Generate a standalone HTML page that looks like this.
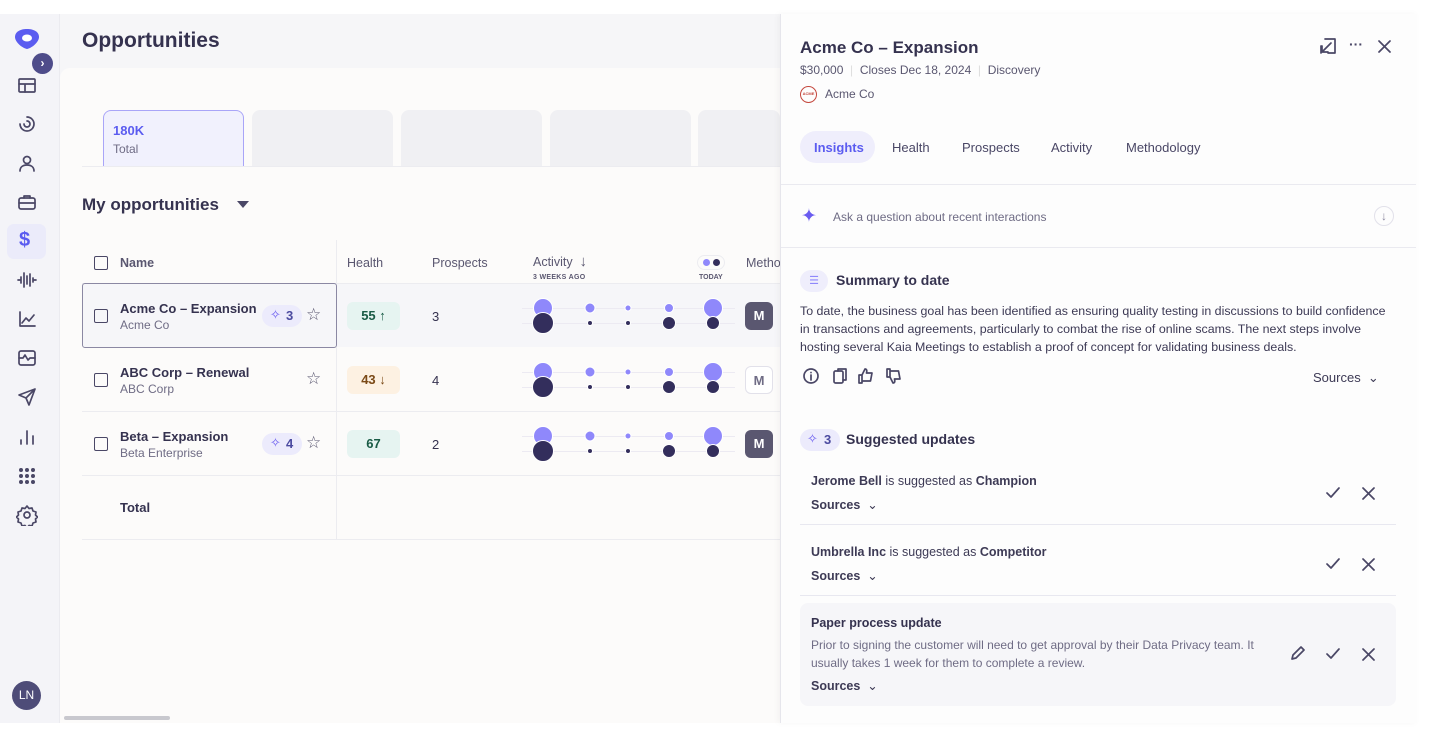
<!DOCTYPE html>
<html><head><meta charset="utf-8"><style>
*{box-sizing:border-box;margin:0;padding:0}
body{width:1429px;height:738px;background:#fff;font-family:"Liberation Sans",sans-serif;color:#35324f;position:relative;overflow:hidden}
.a{position:absolute}
.side{left:0;top:14px;width:60px;height:709px;background:#f4f4f8;border-right:1px solid #ebebf0}
.main{left:60px;top:14px;width:720px;height:709px;background:#f6f6f8}
.inner{left:60px;top:68px;width:720px;height:655px;background:#fcfbfa;border-top-left-radius:10px}
.ic{stroke:#4a4766;fill:none;stroke-width:1.7;stroke-linecap:round;stroke-linejoin:round}
.card{top:110px;width:141px;height:56px;background:#f0f0f3;border-radius:8px 8px 0 0}
.th{font-size:12.5px;color:#5a5770;top:256px}
.cb{width:14px;height:14px;border:1.8px solid #4a4766;border-radius:2px}
.nm{font-size:13px;font-weight:bold;color:#35324f}
.sub{font-size:12px;color:#6f6c85}
.hl{width:53px;height:28px;border-radius:6px;font-size:13px;font-weight:bold;text-align:center;line-height:28px}
.ai{height:22px;border-radius:11px;background:#ecebfc;color:#4b4aa0;font-size:13px;font-weight:bold;line-height:22px;padding-left:24px;width:40px}
.dot{position:absolute;border-radius:50%;transform:translate(-50%,-50%)}
.l{background:#8f88fb;border:1px solid #fff}.d{background:#332e5c;border:1px solid #fff}
.line{position:absolute;height:1px;background:#eceaf2;left:522px;width:213px}
.m{width:28px;height:28px;border-radius:6px;font-size:13px;font-weight:bold;text-align:center;line-height:28px}
.panel{left:780px;top:14px;width:637px;height:709px;background:#fdfdfd;border-left:1px solid #e6e6ec;box-shadow:-2px 0 6px rgba(0,0,0,.04)}
.tab{top:140px;font-size:13px;color:#4a4766}
.src{font-size:13px;font-weight:bold;color:#3d3a55}
</style></head><body>
<div class="a side"></div>
<div class="a main"></div>
<div class="a inner"></div>
<svg class="a" style="left:13px;top:27px" width="28" height="24" viewBox="0 0 28 24"><path d="M14 2C7 2 2 5 2 10c0 5 7 11 12 12 5-1 12-7 12-12 0-5-5-8-12-8z" fill="#5b5cf0"/><ellipse cx="14" cy="11" rx="5" ry="3.5" fill="#fff"/></svg>
<div class="a" style="left:32px;top:53px;width:21px;height:21px;border-radius:50%;background:#4e4c8a;color:#fff;font-size:12px;text-align:center;line-height:20px;font-weight:bold">›</div>
<svg class="a ic" style="left:17px;top:76px" width="20" height="20"><rect x="2" y="3" width="16" height="13" rx="1"/><path d="M2 8h16M8 8v8"/></svg>
<svg class="a ic" style="left:17px;top:114px" width="20" height="20"><path d="M10 3a7 7 0 1 1-7 7"/><path d="M10 7a3 3 0 1 1-3 3"/></svg>
<svg class="a ic" style="left:17px;top:153px" width="20" height="20"><circle cx="10" cy="7" r="3.5"/><path d="M3 18c0-4 3-6 7-6s7 2 7 6"/></svg>
<svg class="a ic" style="left:17px;top:192px" width="20" height="20"><rect x="2" y="6" width="16" height="11" rx="2"/><path d="M7 6V4h6v2M2 11h16"/></svg>
<div class="a" style="left:7px;top:224px;width:39px;height:35px;border-radius:7px;background:#ebebfa"></div>
<div class="a" style="left:19px;top:229px;font-size:20px;font-weight:bold;color:#5b5cf0">$</div>
<svg class="a ic" style="left:16px;top:270px" width="22" height="20"><path d="M2 10h3M5 7v6M8 3v14M11 6v8M14 4v12M17 8v4M17 10h3"/></svg>
<svg class="a ic" style="left:17px;top:309px" width="20" height="20"><path d="M3 3v14h15M5 14l4-5 3 3 5-6"/></svg>
<svg class="a ic" style="left:17px;top:348px" width="20" height="20"><rect x="2" y="3" width="16" height="14" rx="2"/><path d="M2 10h4l2-3 3 5 2-2h5"/></svg>
<svg class="a ic" style="left:17px;top:387px" width="20" height="20"><path d="M18 2L2 8l7 3 3 7z M9 11l9-9"/></svg>
<svg class="a ic" style="left:17px;top:427px" width="20" height="20" stroke-width="2.5"><path d="M4 17v-4M10 17V4M16 17V9"/></svg>
<svg class="a" style="left:17px;top:466px" width="20" height="20" fill="#4a4766"><circle cx="4" cy="4" r="2"/><circle cx="10" cy="4" r="2"/><circle cx="16" cy="4" r="2"/><circle cx="4" cy="10" r="2"/><circle cx="10" cy="10" r="2"/><circle cx="16" cy="10" r="2"/><circle cx="4" cy="16" r="2"/><circle cx="10" cy="16" r="2"/><circle cx="16" cy="16" r="2"/></svg>
<svg class="a ic" style="left:16px;top:504px" width="22" height="22"><circle cx="11" cy="11" r="3"/><path d="M11 2l2 2.5 3-.5 1 3 3 1-.5 3 2 2-2 2 .5 3-3 1-1 3-3-.5-2 2.5-2-2.5-3 .5-1-3-3-1 .5-3-2-2 2-2-.5-3 3-1 1-3 3 .5z"/></svg>
<div class="a" style="left:12px;top:681px;width:29px;height:29px;border-radius:50%;background:#4e4c78;color:#fff;font-size:12px;text-align:center;line-height:29px">LN</div>
<div class="a" style="left:64px;top:716px;width:106px;height:4px;border-radius:2px;background:#c8c8ce"></div>

<div class="a" style="left:82px;top:29px;font-size:21px;font-weight:bold;color:#35324f">Opportunities</div>
<div class="a card" style="left:103px;background:#f1f1fd;border:1.5px solid #a9a5f8;border-bottom:none"></div>
<div class="a" style="left:113px;top:123px;font-size:13px;font-weight:bold;color:#5b5cf0">180K</div>
<div class="a" style="left:113px;top:142px;font-size:12px;color:#6f6c85">Total</div>
<div class="a card" style="left:252px"></div><div class="a card" style="left:401px"></div><div class="a card" style="left:550px"></div><div class="a card" style="left:698px;width:82px"></div>
<div class="a" style="left:82px;top:166px;width:698px;height:1px;background:#ececf0"></div>

<div class="a" style="left:82px;top:195px;font-size:17px;font-weight:bold">My opportunities</div>
<div class="a" style="left:237px;top:201px;width:0;height:0;border-left:6px solid transparent;border-right:6px solid transparent;border-top:7px solid #4a4766"></div>

<div class="a" style="left:336px;top:240px;width:1px;height:300px;background:#ececf0"></div>
<div class="a cb" style="left:94px;top:256px"></div>
<div class="a th" style="left:120px;font-weight:bold">Name</div>
<div class="a th" style="left:347px">Health</div>
<div class="a th" style="left:432px">Prospects</div>
<div class="a th" style="left:533px;top:253px">Activity &nbsp;<span style="font-size:15px">↓</span></div>
<div class="a" style="left:533px;top:274px;font-size:7px;font-weight:bold;color:#5a5770;letter-spacing:.3px">3 WEEKS AGO</div>
<div class="a" style="left:697px;top:255px;width:28px;height:15px;border-radius:8px;border:1px solid #ececf0"></div>
<div class="a" style="left:703px;top:259px;width:7px;height:7px;border-radius:50%;background:#8f88fb"></div>
<div class="a" style="left:713px;top:259px;width:7px;height:7px;border-radius:50%;background:#332e5c"></div>
<div class="a" style="left:699px;top:274px;font-size:7px;font-weight:bold;color:#5a5770">TODAY</div>
<div class="a th" style="left:746px">Metho</div>
<div class="a" style="left:82px;top:283px;width:698px;height:1px;background:#ececf0"></div>
<div class="a" style="left:336px;top:284px;width:444px;height:63px;background:#f6f6f9"></div>
<div class="a" style="left:82px;top:283px;width:255px;height:65px;border:1.5px solid #8b88a3;border-radius:3px;background:#f6f6f9"></div>
<div class="a" style="left:82px;top:411px;width:698px;height:1px;background:#ececf0"></div>
<div class="a" style="left:82px;top:475px;width:698px;height:1px;background:#ececf0"></div>
<div class="a" style="left:82px;top:539px;width:698px;height:1px;background:#ececf0"></div>

<div class="a cb" style="left:94px;top:309px"></div>
<div class="a nm" style="left:120px;top:301px">Acme Co – Expansion</div>
<div class="a sub" style="left:120px;top:318px">Acme Co</div>
<div class="a ai" style="left:262px;top:305px">3</div><div class="a" style="left:270px;top:307px;color:#6a5cf0;font-size:13px">✧</div>
<div class="a" style="left:306px;top:305px;font-size:17px;color:#5a5770">☆</div>
<div class="a hl" style="left:347px;top:302px;background:#e6f4f1;color:#195b45">55 ↑</div>
<div class="a" style="left:432px;top:309px;font-size:13px">3</div>

<div class="a cb" style="left:94px;top:373px"></div>
<div class="a nm" style="left:120px;top:365px">ABC Corp – Renewal</div>
<div class="a sub" style="left:120px;top:382px">ABC Corp</div>
<div class="a" style="left:306px;top:369px;font-size:17px;color:#5a5770">☆</div>
<div class="a hl" style="left:347px;top:366px;background:#fdf1e2;color:#7b4a17">43 ↓</div>
<div class="a" style="left:432px;top:373px;font-size:13px">4</div>

<div class="a cb" style="left:94px;top:437px"></div>
<div class="a nm" style="left:120px;top:429px">Beta – Expansion</div>
<div class="a sub" style="left:120px;top:446px">Beta Enterprise</div>
<div class="a ai" style="left:262px;top:433px">4</div><div class="a" style="left:270px;top:435px;color:#6a5cf0;font-size:13px">✧</div>
<div class="a" style="left:306px;top:433px;font-size:17px;color:#5a5770">☆</div>
<div class="a hl" style="left:347px;top:430px;background:#e6f4f1;color:#195b45">67</div>
<div class="a" style="left:432px;top:437px;font-size:13px">2</div>
<div class="a nm" style="left:120px;top:500px">Total</div>

<div class="line" style="top:308px"></div><div class="line" style="top:323px"></div>
<div class="line" style="top:372px"></div><div class="line" style="top:387px"></div>
<div class="line" style="top:436px"></div><div class="line" style="top:451px"></div>
<div class="dot l" style="left:543px;top:308px;width:20px;height:20px"></div><div class="dot d" style="left:543px;top:323px;width:22px;height:22px"></div>
<div class="dot l" style="left:590px;top:308px;width:11px;height:11px"></div><div class="dot d" style="left:590px;top:323px;width:6px;height:6px"></div>
<div class="dot l" style="left:628px;top:308px;width:7px;height:7px"></div><div class="dot d" style="left:628px;top:323px;width:6px;height:6px"></div>
<div class="dot l" style="left:669px;top:308px;width:10px;height:10px"></div><div class="dot d" style="left:669px;top:323px;width:14px;height:14px"></div>
<div class="dot l" style="left:713px;top:308px;width:20px;height:20px"></div><div class="dot d" style="left:713px;top:323px;width:14px;height:14px"></div>

<div class="dot l" style="left:543px;top:372px;width:20px;height:20px"></div><div class="dot d" style="left:543px;top:387px;width:22px;height:22px"></div>
<div class="dot l" style="left:590px;top:372px;width:11px;height:11px"></div><div class="dot d" style="left:590px;top:387px;width:6px;height:6px"></div>
<div class="dot l" style="left:628px;top:372px;width:7px;height:7px"></div><div class="dot d" style="left:628px;top:387px;width:6px;height:6px"></div>
<div class="dot l" style="left:669px;top:372px;width:10px;height:10px"></div><div class="dot d" style="left:669px;top:387px;width:14px;height:14px"></div>
<div class="dot l" style="left:713px;top:372px;width:20px;height:20px"></div><div class="dot d" style="left:713px;top:387px;width:14px;height:14px"></div>

<div class="dot l" style="left:543px;top:436px;width:20px;height:20px"></div><div class="dot d" style="left:543px;top:451px;width:22px;height:22px"></div>
<div class="dot l" style="left:590px;top:436px;width:11px;height:11px"></div><div class="dot d" style="left:590px;top:451px;width:6px;height:6px"></div>
<div class="dot l" style="left:628px;top:436px;width:7px;height:7px"></div><div class="dot d" style="left:628px;top:451px;width:6px;height:6px"></div>
<div class="dot l" style="left:669px;top:436px;width:10px;height:10px"></div><div class="dot d" style="left:669px;top:451px;width:14px;height:14px"></div>
<div class="dot l" style="left:713px;top:436px;width:20px;height:20px"></div><div class="dot d" style="left:713px;top:451px;width:14px;height:14px"></div>

<div class="a m" style="left:745px;top:302px;background:#5a5770;color:#fff">M</div>
<div class="a m" style="left:745px;top:366px;border:1px solid #e2e1ea;color:#6f6c85;background:#fff">M</div>
<div class="a m" style="left:745px;top:430px;background:#5a5770;color:#fff">M</div>

<div class="a panel"></div>
<div class="a" style="left:800px;top:38px;font-size:17px;font-weight:bold">Acme Co – Expansion</div>
<div class="a" style="left:800px;top:63px;font-size:12px;color:#5a5770">$30,000 <span style="color:#ddd">&nbsp;|&nbsp;</span> Closes Dec 18, 2024 <span style="color:#ddd">&nbsp;|&nbsp;</span> Discovery</div>
<div class="a" style="left:800px;top:86px;width:17px;height:17px;border-radius:50%;border:1.5px solid #c4473d;font-size:4px;color:#c4473d;text-align:center;line-height:14px;font-weight:bold">ACME</div>
<div class="a" style="left:825px;top:87px;font-size:12px;color:#5a5770">Acme Co</div>
<svg class="a ic" style="left:1319px;top:37px" width="18" height="18"><path d="M6 2h10v14H9M2 9v7M12 6L3 15M3 9v6h6"/></svg>
<div class="a" style="left:1349px;top:36px;font-size:14px;font-weight:bold;color:#4a4766">···</div>
<svg class="a ic" style="left:1378px;top:40px" width="13" height="13"><path d="M1 1l11 11M12 1L1 12"/></svg>

<div class="a" style="left:800px;top:131px;width:75px;height:32px;border-radius:16px;background:#efeefc"></div>
<div class="a tab" style="left:814px;color:#5b5cf0;font-weight:bold">Insights</div>
<div class="a tab" style="left:892px">Health</div>
<div class="a tab" style="left:962px">Prospects</div>
<div class="a tab" style="left:1051px">Activity</div>
<div class="a tab" style="left:1126px">Methodology</div>
<div class="a" style="left:781px;top:184px;width:635px;height:1px;background:#eaeaf0"></div>
<div class="a" style="left:801px;top:205px;font-size:19px;color:#6a5cf0">✦</div>
<div class="a" style="left:833px;top:210px;font-size:12px;color:#6f6c85">Ask a question about recent interactions</div>
<div class="a" style="left:1374px;top:206px;width:20px;height:20px;border-radius:50%;border:1px solid #e2e1ea;text-align:center;font-size:12px;line-height:18px;color:#8c89a0">↓</div>
<div class="a" style="left:781px;top:247px;width:635px;height:1px;background:#eaeaf0"></div>

<div class="a" style="left:800px;top:270px;width:28px;height:22px;border-radius:11px;background:#efeefc;color:#8f88fb;font-size:11px;text-align:center;line-height:22px">☰</div>
<div class="a" style="left:836px;top:272px;font-size:14px;font-weight:bold">Summary to date</div>
<div class="a" style="left:800px;top:302px;width:595px;font-size:12.4px;line-height:18px;color:#3d3a55">To date, the business goal has been identified as ensuring quality testing in discussions to build confidence in transactions and agreements, particularly to combat the rise of online scams. The next steps involve hosting several Kaia Meetings to establish a proof of concept for validating business deals.</div>
<svg class="a ic" style="left:802px;top:367px;width:112px;height:18px" viewBox="0 0 112 18" stroke-width="1.4"><circle cx="9" cy="9" r="7"/><path d="M9 8v5M9 5.5v.1"/><rect x="32" y="4" width="9" height="12" rx="1.5"/><path d="M36 4V2h8v11h-3"/><path d="M60 8v8h-3V8zM60 8l3-6c2 0 2 2 1.5 4H70l-1.5 8H60"/><path d="M88 10V2h-3v8zM88 10l3 6c2 0 2-2 1.5-4H98l-1.5-8H88"/></svg>
<div class="a src" style="left:1313px;top:370px;font-weight:normal;color:#3d3a55">Sources &nbsp;⌄</div>

<div class="a ai" style="left:800px;top:429px;width:40px;height:22px;padding-left:24px">3</div><div class="a" style="left:807px;top:431px;color:#6a5cf0;font-size:13px">✧</div>
<div class="a" style="left:846px;top:431px;font-size:14px;font-weight:bold">Suggested updates</div>

<div class="a" style="left:811px;top:474px;font-size:12.5px;color:#3d3a55"><b>Jerome Bell</b> is suggested as <b>Champion</b></div>
<div class="a src" style="left:811px;top:497px;font-size:12.5px">Sources &nbsp;<span style="font-weight:normal">⌄</span></div>
<div class="a" style="left:800px;top:524px;width:596px;height:1px;background:#e8e8f0"></div>
<div class="a" style="left:811px;top:545px;font-size:12.5px;color:#3d3a55"><b>Umbrella Inc</b> is suggested as <b>Competitor</b></div>
<div class="a src" style="left:811px;top:568px;font-size:12.5px">Sources &nbsp;<span style="font-weight:normal">⌄</span></div>
<div class="a" style="left:800px;top:595px;width:596px;height:1px;background:#e8e8f0"></div>
<div class="a" style="left:800px;top:603px;width:596px;height:103px;border-radius:8px;background:#f6f6f9"></div>
<div class="a" style="left:811px;top:616px;font-size:12.5px;font-weight:bold">Paper process update</div>
<div class="a" style="left:811px;top:636px;width:470px;font-size:12px;line-height:18px;color:#6f6c85">Prior to signing the customer will need to get approval by their Data Privacy team. It usually takes 1 week for them to complete a review.</div>
<div class="a src" style="left:811px;top:678px;font-size:12.5px">Sources &nbsp;<span style="font-weight:normal">⌄</span></div>
<svg class="a ic" style="left:1326px;top:486px" width="14" height="14"><path d="M1 7l4 4 8-9"/></svg>
<svg class="a ic" style="left:1362px;top:487px" width="13" height="13"><path d="M1 1l11 11M12 1L1 12"/></svg>
<svg class="a ic" style="left:1326px;top:557px" width="14" height="14"><path d="M1 7l4 4 8-9"/></svg>
<svg class="a ic" style="left:1362px;top:558px" width="13" height="13"><path d="M1 1l11 11M12 1L1 12"/></svg>
<svg class="a ic" style="left:1290px;top:646px" width="15" height="15"><path d="M2 13l1-4 8-8 3 3-8 8z"/></svg>
<svg class="a ic" style="left:1326px;top:647px" width="14" height="14"><path d="M1 7l4 4 8-9"/></svg>
<svg class="a ic" style="left:1362px;top:648px" width="13" height="13"><path d="M1 1l11 11M12 1L1 12"/></svg>
</body></html>
